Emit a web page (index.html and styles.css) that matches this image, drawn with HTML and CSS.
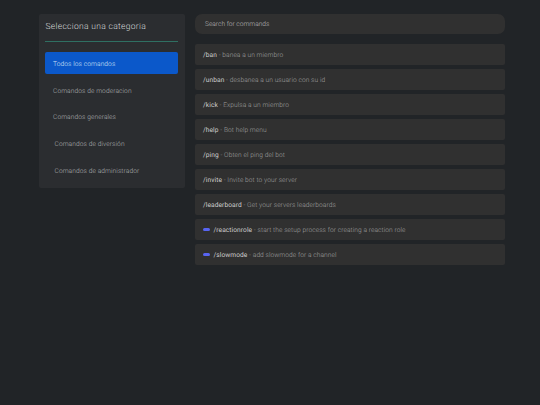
FILE: index.html
```html
<!DOCTYPE html>
<html lang="es">
<head>
    <meta charset="UTF-8">
    <title>Comandos</title>
    <link rel="stylesheet" href="styles.css">
</head>
<body>
    <div class="page">
        <aside class="sidebar">
            <div class="sidebar-title">Selecciona una categoria</div>
            <div class="sidebar-line"></div>
            <div class="category active">Todos los comandos</div>
            <div class="category">Comandos de moderacion</div>
            <div class="category">Comandos generales</div>
            <div class="category shifted">Comandos de diversión</div>
            <div class="category shifted">Comandos de administrador</div>
        </aside>
        <main class="commands">
            <div class="search">Search for commands</div>
            <div class="list">
                <div class="command"><b>/ban</b> - banea a un miembro</div>
                <div class="command"><b>/unban</b> - desbanea a un usuario con su id</div>
                <div class="command"><b>/kick</b> - Expulsa a un miembro</div>
                <div class="command"><b>/help</b> - Bot help menu</div>
                <div class="command"><b>/ping</b> - Obten el ping del bot</div>
                <div class="command"><b>/invite</b> - Invite bot to your server</div>
                <div class="command"><b>/leaderboard</b> - Get your servers leaderboards</div>
                <div class="command"><span class="pill"></span><b>/reactionrole</b> - start the setup process for creating a reaction role</div>
                <div class="command"><span class="pill"></span><b>/slowmode</b> - add slowmode for a channel</div>
            </div>
        </main>
    </div>
</body>
</html>
```
FILE: styles.css
```css
html, body {
    height: 100%;
}
body {
    margin: 0;
    background: #212427;
    font-family: Roboto, "Liberation Sans", sans-serif;
    font-weight: 300;
    text-rendering: geometricPrecision;
    overflow: hidden;
}
.page {
    display: flex;
    align-items: flex-start;
    gap: 10px;
    padding: 14px 35px 0 39px;
}
.sidebar {
    box-sizing: border-box;
    width: 146px;
    height: 174px;
    flex: none;
    padding: 7px 7px 0 6px;
    background: #2b2d30;
    border-radius: 2px;
}
.sidebar-title {
    height: 13px;
    line-height: 12px;
    font-size: 8.5px;
    letter-spacing: 0.3px;
    padding-left: 0.5px;
    color: #d4d6d7;
}
.sidebar-line {
    height: 1px;
    margin-top: 7px;
    margin-bottom: 10px;
    background: #2f6f62;
}
.category {
    height: 22px;
    margin-bottom: 4.7px;
    padding-left: 8px;
    line-height: 24px;
    font-size: 6.6px;
    letter-spacing: 0.1px;
    color: #b0b2b4;
    border-radius: 2px;
}
.category.active {
    background: #0b58ca;
    color: #dbe7f8;
}
.category.shifted {
    padding-left: 9.5px;
}
.commands {
    flex: 1;
}
.search {
    height: 20px;
    padding-left: 10px;
    margin-bottom: 10px;
    line-height: 20px;
    font-size: 6.6px;
    color: #bdbdbd;
    background: #303030;
    border-radius: 7px;
}
.list {
    display: flex;
    flex-direction: column;
    gap: 4px;
}
.command {
    display: flex;
    align-items: center;
    white-space: pre;
    height: 21px;
    padding-left: 8px;
    font-size: 6.6px;
    letter-spacing: 0.08px;
    color: #a0a0a0;
    background: #303030;
    border-radius: 2px;
}
.command b {
    font-weight: 400;
    color: #cfcfcf;
}
.pill {
    width: 7px;
    height: 3.5px;
    margin-right: 3.5px;
    background: #5865f2;
    border-radius: 2px;
}
```
